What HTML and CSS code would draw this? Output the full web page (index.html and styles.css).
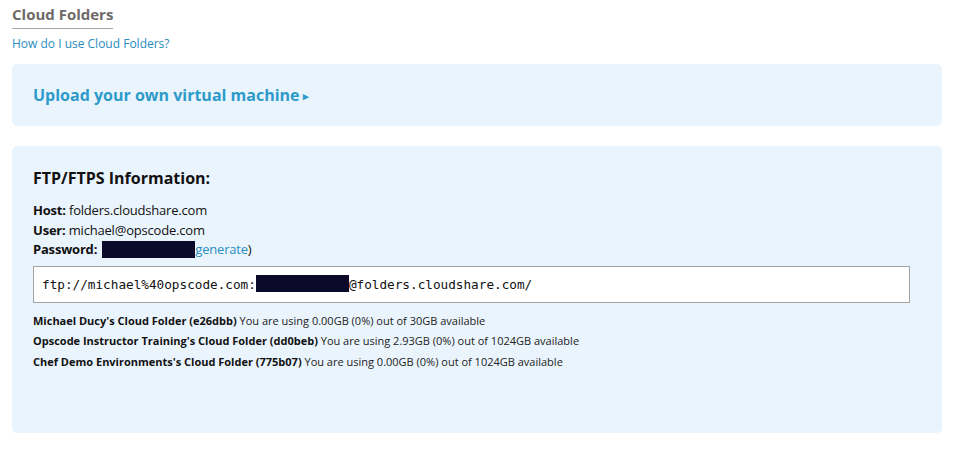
FILE: index.html
```html
<!DOCTYPE html>
<html>
<head>
<meta charset="utf-8">
<link rel="stylesheet" href="styles.css">
</head>
<body>
<div class="page">
  <h1 class="title">Cloud Folders</h1>
  <a class="help" href="#">How do I use Cloud Folders?</a>
  <div class="panel upload">
    <a class="upload-link" href="#">Upload your own virtual machine<span class="arrow">&#9656;</span></a>
  </div>
  <div class="panel ftp">
    <h2 class="ftp-title">FTP/FTPS Information:</h2>
    <div class="info">
      <div><b>Host:</b> folders.cloudshare.com</div>
      <div><b>User:</b> michael@opscode.com</div>
      <div><b>Password:</b> <span class="redact pw"></span><a class="regen" href="#">generate</a>)</div>
    </div>
    <div class="url">ftp://michael%40opscode.com:<span class="redact url-pw"></span>@folders.cloudshare.com/</div>
    <div class="folders">
      <div><b>Michael Ducy's Cloud Folder (e26dbb)</b> You are using 0.00GB (0%) out of 30GB available</div>
      <div><b>Opscode Instructor Training's Cloud Folder (dd0beb)</b> You are using 2.93GB (0%) out of 1024GB available</div>
      <div><b>Chef Demo Environments's Cloud Folder (775b07)</b> You are using 0.00GB (0%) out of 1024GB available</div>
    </div>
  </div>
</div>
</body>
</html>
```
FILE: styles.css
```css
* { box-sizing: border-box; }
html, body { margin: 0; padding: 0; background: #fff; }
body { font-family: "Open Sans", "Liberation Sans", sans-serif; color: #222; }
.page { padding: 3px 23px 0 12px; }
.title {
  display: inline-block;
  margin: 0;
  font-size: 15px;
  font-weight: 700;
  color: #6e6a67;
  line-height: 20px;
  padding-bottom: 4px;
  border-bottom: 1px solid #a8a6a4;
}
.help {
  display: block;
  margin-top: 7px;
  font-size: 12px;
  line-height: 16px;
  color: #2a8dc0;
  text-decoration: none;
}
.panel {
  background: #eaf4fd;
  border-radius: 5px;
}
.upload {
  margin-top: 12px;
  height: 62px;
  padding: 20px 21px 0;
}
.upload-link {
  font-size: 16px;
  font-weight: 700;
  color: #2d9bca;
  text-decoration: none;
  line-height: 22px;
}
.arrow { font-size: 11px; margin-left: 3px; vertical-align: 1px; }
.ftp {
  margin-top: 20px;
  height: 287px;
  padding: 20px 32px 0 21px;
}
.ftp-title {
  margin: 0;
  font-size: 16px;
  font-weight: 700;
  color: #111;
  line-height: 24px;
}
.info {
  margin-top: 11px;
  font-size: 13px;
  line-height: 19.5px;
  color: #111;
  letter-spacing: -0.2px;
}
.info b { font-weight: 700; }
.redact { display: inline-block; background: #0c0a2b; vertical-align: middle; }
.pw { width: 93px; height: 17px; margin-top: -3px; margin-left: 2px; }
.regen { color: #2a8dc0; text-decoration: none; }
.url {
  margin-top: 6px;
  height: 37px;
  border: 1px solid #a3a3a3;
  background: #fff;
  font-family: "DejaVu Sans Mono", "Liberation Mono", monospace;
  font-size: 12.7px;
  line-height: 35px;
  padding-left: 8px;
  color: #111;
}
.url-pw { width: 93px; height: 17px; margin-top: -3px; }
.folders {
  margin-top: 8px;
  font-size: 11px;
  line-height: 20.5px;
  color: #222;
}
.folders b { color: #111; }
```
